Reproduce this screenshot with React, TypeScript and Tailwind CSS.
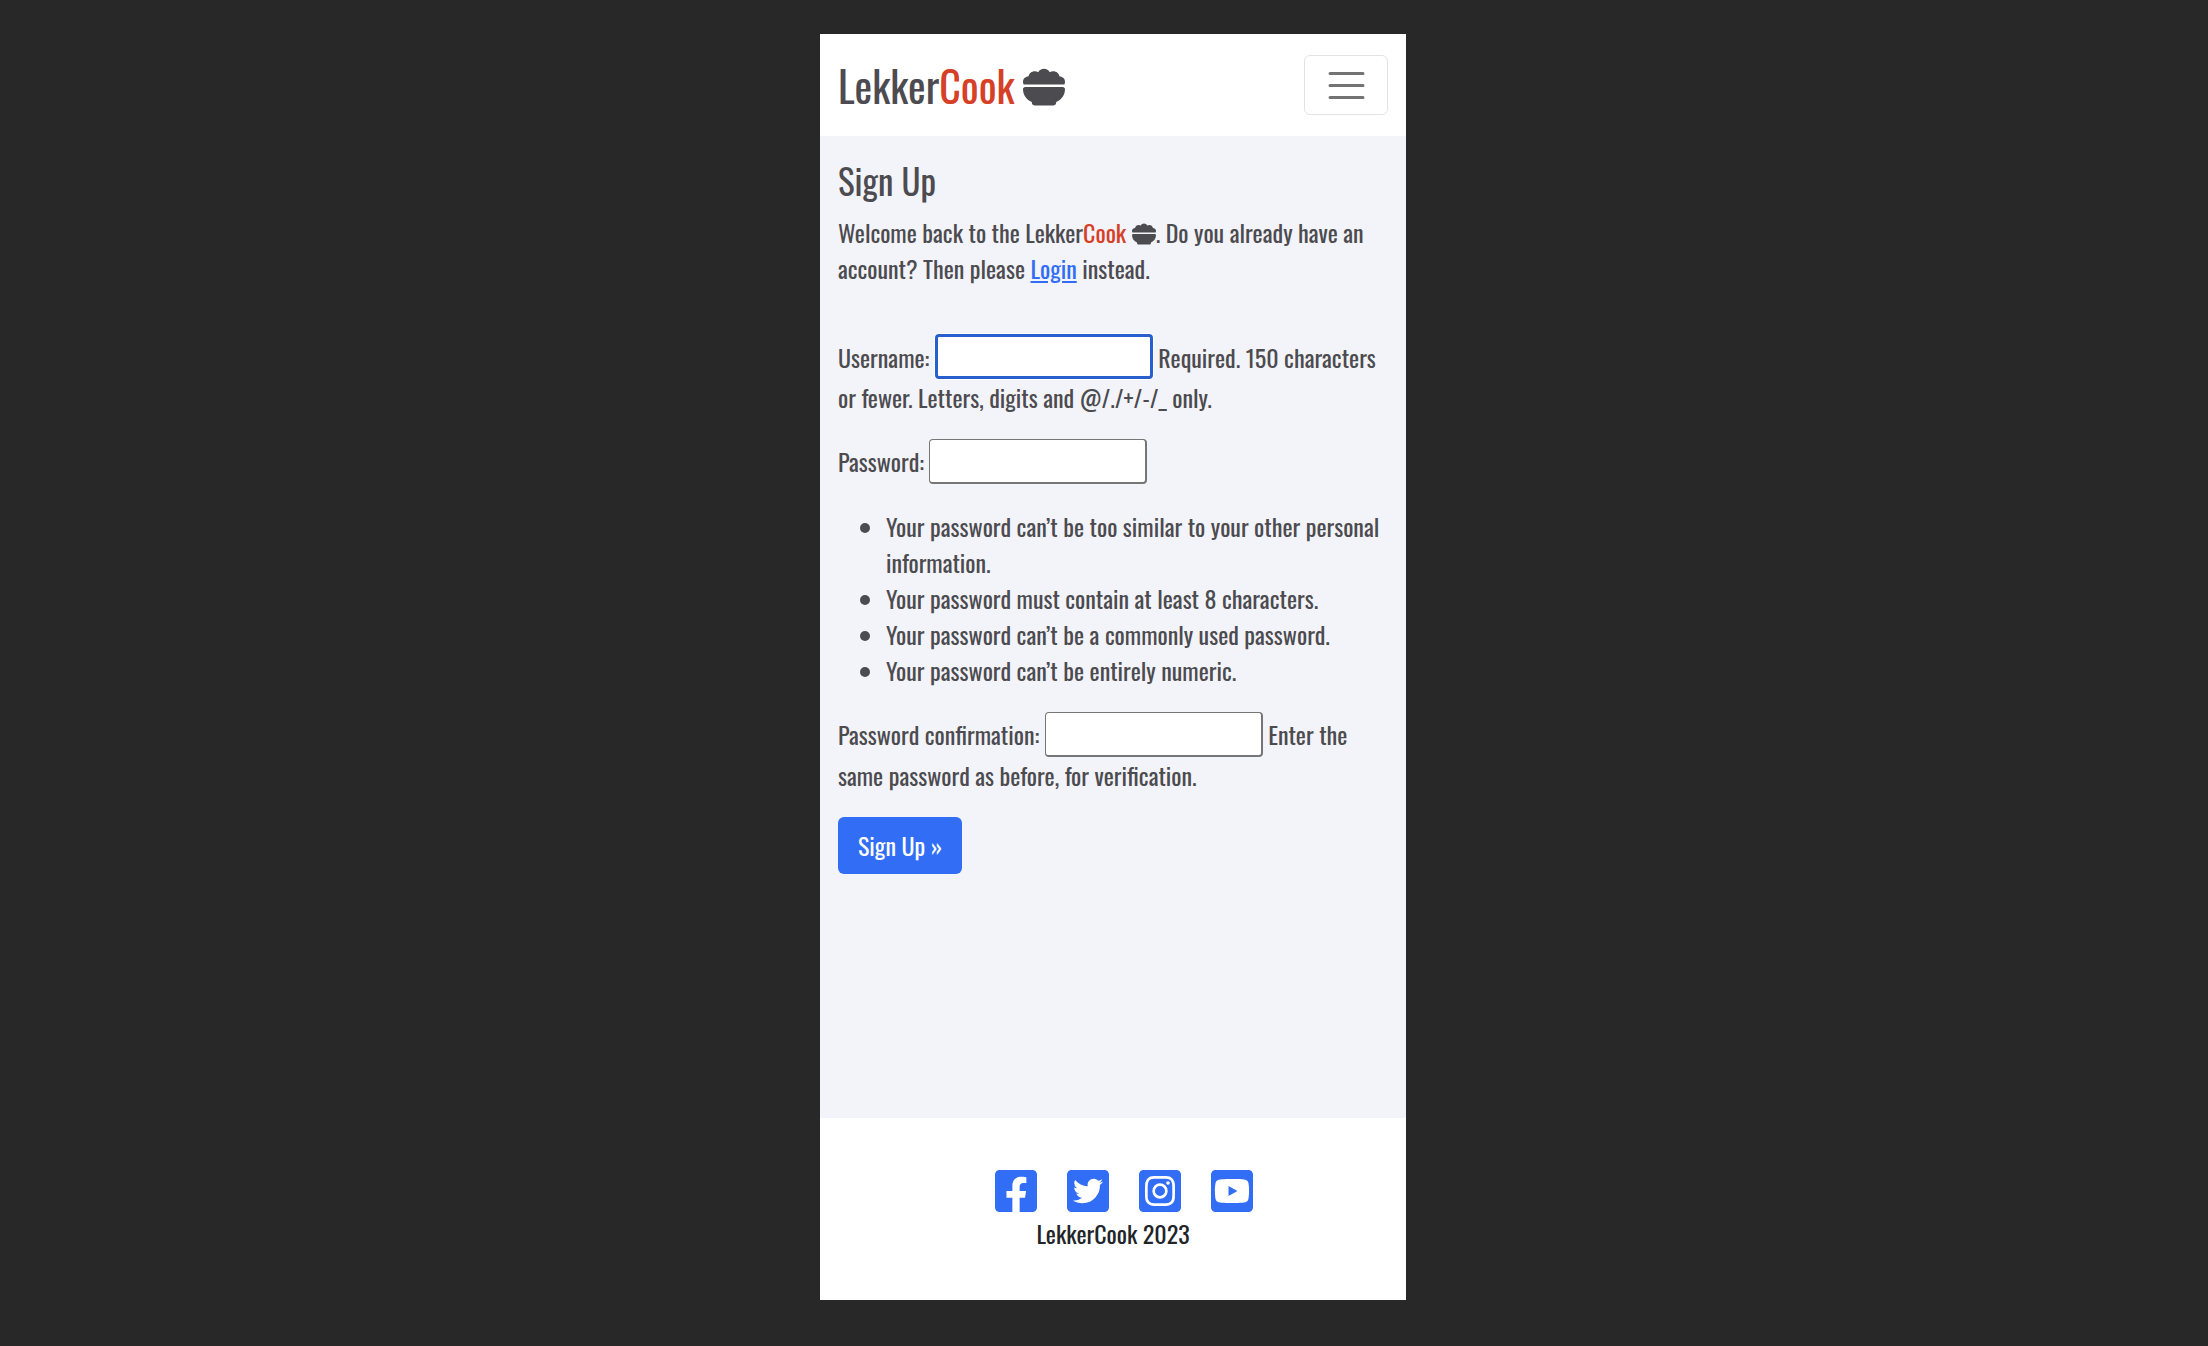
import type { ReactNode } from "react";
import {
  FaFacebookSquare,
  FaInstagramSquare,
  FaTwitterSquare,
  FaYoutubeSquare,
} from "react-icons/fa";
import { FaBowlFood } from "react-icons/fa6";

const socials = [
  { name: "Facebook", Icon: FaFacebookSquare },
  { name: "Twitter", Icon: FaTwitterSquare },
  { name: "Instagram", Icon: FaInstagramSquare },
  { name: "YouTube", Icon: FaYoutubeSquare },
];

const passwordRules = [
  "Your password can’t be too similar to your other personal information.",
  "Your password must contain at least 8 characters.",
  "Your password can’t be a commonly used password.",
  "Your password can’t be entirely numeric.",
];

function Field({
  id,
  label,
  type,
  active = false,
  help,
}: {
  id: string;
  label: string;
  type: string;
  active?: boolean;
  help?: ReactNode;
}) {
  return (
    <p className="mb-6">
      <label htmlFor={id}>{label}</label>{" "}
      <input
        id={id}
        name={id}
        type={type}
        className={
          active
            ? "h-[45px] w-[218px] rounded-[4px] border-[3px] border-[#285fce] bg-white px-1 shadow-[0_0_0_1px_#ffffff] outline-none"
            : "h-[45px] w-[218px] rounded-[4px] border border-r-2 border-b-2 border-[#767676] bg-white px-1 outline-none"
        }
      />{" "}
      {help}
    </p>
  );
}

export default function App() {
  return (
    <div className="flex min-h-screen flex-col items-center bg-[#282828] pt-[34px] pb-[46px] pl-[18px] font-['Oswald','Roboto_Condensed',sans-serif] text-2xl leading-9 text-[#4c4b50]">
      <div className="flex w-full max-w-[586px] grow flex-col bg-white">
        <header className="flex items-center justify-between px-[18px] py-5">
          <a href="#" className="flex items-center gap-2 text-[42px] leading-[62px]">
            <span>
              Lekker<span className="text-[#d64027]">Cook</span>
            </span>
            <FaBowlFood aria-hidden="true" className="mt-1" />
          </a>
          <button
            type="button"
            aria-label="Toggle navigation"
            className="flex h-[60px] w-[84px] items-center justify-center rounded-md border border-[#e3e3e3]"
          >
            <svg viewBox="0 0 30 30" className="size-[45px]" fill="none" stroke="#737373" strokeWidth="2" strokeLinecap="round" strokeMiterlimit="10">
              <path d="M4 7h22M4 15h22M4 23h22" />
            </svg>
          </button>
        </header>

        <main className="grow bg-[#f3f4f9] px-[18px] pt-[22px]">
          <h1 className="mb-3 text-[35px] leading-[44px]">Sign Up</h1>
          <p className="mb-12">
            Welcome back to the Lekker<span className="text-[#d64027]">Cook</span>{" "}
            <FaBowlFood aria-hidden="true" className="inline-block align-[-3px]" />. Do you already have an
            account? Then please{" "}
            <a href="#" className="text-[#326ef5] underline">Login</a> instead.
          </p>

          <form>
            <Field
              id="username"
              label="Username:"
              type="text"
              active
              help="Required. 150 characters or fewer. Letters, digits and @/./+/-/_ only."
            />
            <Field id="password1" label="Password:" type="password" />
            <ul className="mb-6 list-disc pl-12">
              {passwordRules.map((rule) => (
                <li key={rule}>{rule}</li>
              ))}
            </ul>
            <Field
              id="password2"
              label="Password confirmation:"
              type="password"
              help="Enter the same password as before, for verification."
            />
            <button type="submit" className="h-[57px] rounded-md bg-[#326ef5] px-5 pb-0.5 text-white">
              Sign Up »
            </button>
          </form>
        </main>

        <footer className="flex flex-col items-center py-[49px] text-[#212529]">
          <nav aria-label="Social media" className="flex gap-[30px] pl-[22px]">
            {socials.map(({ name, Icon }) => (
              <a key={name} href="#" aria-label={name} className="text-[#326ef5]">
                <Icon className="h-12 w-[42px]" />
              </a>
            ))}
          </nav>
          <p>LekkerCook 2023</p>
        </footer>
      </div>
    </div>
  );
}
